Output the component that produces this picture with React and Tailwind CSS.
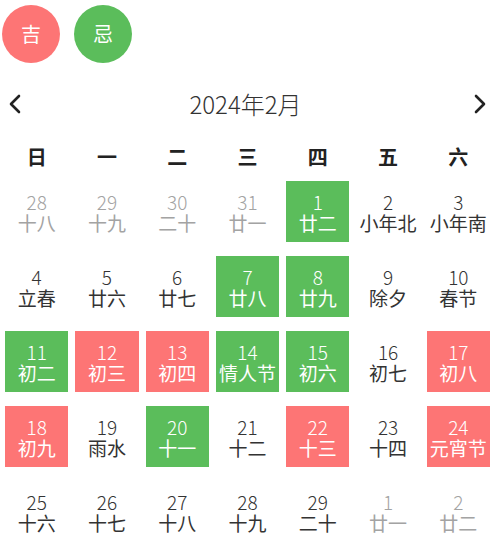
const WEEK = ["日", "一", "二", "三", "四", "五", "六"];

// [day, lunar, kind] kind: o = other month, g = 吉 (green), r = 忌 (red)
const DAYS = [
  [28, "十八", "o"], [29, "十九", "o"], [30, "二十", "o"], [31, "廿一", "o"], [1, "廿二", "g"], [2, "小年北"], [3, "小年南"],
  [4, "立春"], [5, "廿六"], [6, "廿七"], [7, "廿八", "g"], [8, "廿九", "g"], [9, "除夕"], [10, "春节"],
  [11, "初二", "g"], [12, "初三", "r"], [13, "初四", "r"], [14, "情人节", "g"], [15, "初六", "g"], [16, "初七"], [17, "初八", "r"],
  [18, "初九", "r"], [19, "雨水"], [20, "十一", "g"], [21, "十二"], [22, "十三", "r"], [23, "十四"], [24, "元宵节", "r"],
  [25, "十六"], [26, "十七"], [27, "十八"], [28, "十九"], [29, "二十"], [1, "廿一", "o"], [2, "廿二", "o"],
];

const KIND = {
  o: "text-[#a3a3a3]",
  g: "bg-[#5bbd5b] text-white",
  r: "bg-[#fd7575] text-white",
};

function Chevron({ dir }) {
  return (
    <svg width="16" height="22" viewBox="0 0 16 22" fill="none">
      <path
        d={dir === "left" ? "M12 3 L4 11 L12 19" : "M4 3 L12 11 L4 19"}
        stroke="#222"
        strokeWidth="2.6"
        strokeLinecap="round"
        strokeLinejoin="round"
      />
    </svg>
  );
}

export default function App() {
  return (
    <div
      className="w-[500px] h-[547px] overflow-hidden bg-white text-[#333]"
      style={{ fontFamily: '"Noto Sans CJK SC", "Noto Sans", sans-serif' }}
    >
      <div className="flex gap-[14px] pl-[2px] pt-[5px]">
        <div className="flex h-[58px] w-[58px] items-center justify-center rounded-full bg-[#fd7575] text-[20px] text-white">吉</div>
        <div className="flex h-[58px] w-[58px] items-center justify-center rounded-full bg-[#5bbd5b] text-[20px] text-white">忌</div>
      </div>

      <div className="mt-[21px] flex h-[40px] items-center justify-between pl-[7px] pr-[12px]">
        <Chevron dir="left" />
        <div className="ml-[-4px] text-[24px] font-light leading-none text-[#333]">2024年2月</div>
        <Chevron dir="right" />
      </div>

      <div className="ml-[5px] mt-[16px] grid h-[34px] w-[485px] grid-cols-7 gap-x-[7px] items-center">
        {WEEK.map((w) => (
          <div key={w} className="text-center text-[20px] font-bold leading-none text-[#222]">{w}</div>
        ))}
      </div>

      <div className="ml-[5px] mt-[7px] grid w-[485px] grid-cols-7 gap-x-[7px] gap-y-[14px]">
        {DAYS.map(([d, l, k], i) => (
          <div
            key={i}
            className={`flex h-[61px] flex-col items-center justify-center gap-[2px] text-[19px] leading-[19px] ${k ? KIND[k] : "text-[#333]"}`}
          >
            <div className="h-[19px] font-light">{d}</div>
            <div className="h-[19px]">{l}</div>
          </div>
        ))}
      </div>
    </div>
  );
}
